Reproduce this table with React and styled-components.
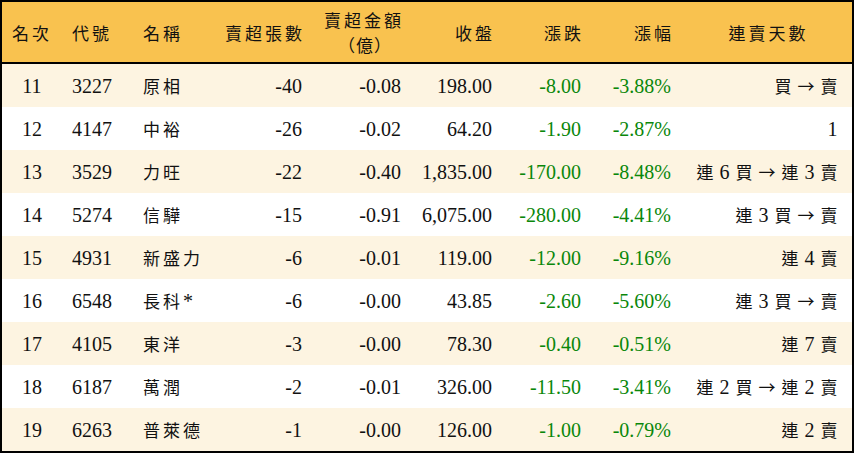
import React from 'react'
import styled, { createGlobalStyle } from 'styled-components'

const GlobalStyle = createGlobalStyle`
  html, body {
    margin: 0;
    padding: 0;
    background: #ffffff;
  }
`

const headerBg = '#f9c24f'
const oddBg = '#fdf4e1'
const downGreen = '#0a870a'

// column layout: width, alignment, paddings
const columns = [
  { width: 60, align: 'center', pl: 0, pr: 0 },
  { width: 70, align: 'left', pl: 10, pr: 0 },
  { width: 80, align: 'left', pl: 11, pr: 0 },
  { width: 100, align: 'right', pl: 0, pr: 10 },
  { width: 99, align: 'right', pl: 0, pr: 10 },
  { width: 91, align: 'right', pl: 0, pr: 10 },
  { width: 89, align: 'right', pl: 0, pr: 10 },
  { width: 90, align: 'right', pl: 0, pr: 10 },
  { width: 169, align: 'right', pl: 0, pr: 12 },
]

const gridColumns = columns.map((c) => `${c.width}px`).join(' ')

const headers = [
  '名次',
  '代號',
  '名稱',
  '賣超張數',
  ['賣超金額', '（億）'],
  '收盤',
  '漲跌',
  '漲幅',
  '連賣天數',
]

const rows = [
  ['11', '3227', '原相', '-40', '-0.08', '198.00', '-8.00', '-3.88%', '買 → 賣'],
  ['12', '4147', '中裕', '-26', '-0.02', '64.20', '-1.90', '-2.87%', '1'],
  ['13', '3529', '力旺', '-22', '-0.40', '1,835.00', '-170.00', '-8.48%', '連 6 買 → 連 3 賣'],
  ['14', '5274', '信驊', '-15', '-0.91', '6,075.00', '-280.00', '-4.41%', '連 3 買 → 賣'],
  ['15', '4931', '新盛力', '-6', '-0.01', '119.00', '-12.00', '-9.16%', '連 4 賣'],
  ['16', '6548', '長科*', '-6', '-0.00', '43.85', '-2.60', '-5.60%', '連 3 買 → 賣'],
  ['17', '4105', '東洋', '-3', '-0.00', '78.30', '-0.40', '-0.51%', '連 7 賣'],
  ['18', '6187', '萬潤', '-2', '-0.01', '326.00', '-11.50', '-3.41%', '連 2 買 → 連 2 賣'],
  ['19', '6263', '普萊德', '-1', '-0.00', '126.00', '-1.00', '-0.79%', '連 2 賣'],
]

const Table = styled.div`
  box-sizing: border-box;
  width: 854px;
  height: 453px;
  border: 2px solid #000;
  background: #fff;
  font-family: "Liberation Serif", "Noto Sans CJK TC", serif;
  color: #111;
  overflow: hidden;
`

const HeaderRow = styled.div`
  display: grid;
  grid-template-columns: ${gridColumns};
  height: 60px;
  background: ${headerBg};
  border-bottom: 2px solid #000;
`

const Row = styled.div`
  display: grid;
  grid-template-columns: ${gridColumns};
  height: 43px;
  background: ${(p) => (p.$odd ? oddBg : '#fff')};
`

const Cell = styled.div`
  display: flex;
  flex-direction: column;
  justify-content: center;
  align-items: ${(p) =>
    p.$align === 'left' ? 'flex-start' : p.$align === 'right' ? 'flex-end' : 'center'};
  padding-left: ${(p) => p.$pl}px;
  padding-right: ${(p) => p.$pr}px;
  font-size: 20px;
  line-height: 24px;
  white-space: nowrap;
  color: ${(p) => (p.$down ? downGreen : 'inherit')};
`

const HeadCell = styled(Cell)`
  font-size: 17px;
  line-height: 24px;
  gap: 1px;
  padding-top: 1px;
  text-align: ${(p) => (p.$align === 'left' ? 'left' : 'right')};
`

const HeadLine = styled.div`
  height: 24px;
  line-height: 24px;
  align-self: ${(p) => (p.$centered ? 'center' : 'auto')};
  margin-left: ${(p) => (p.$centered ? '14px' : '0')};
`

const Han = styled.span`
  font-family: "Noto Sans CJK TC", sans-serif;
  font-size: 17px;
  letter-spacing: ${(p) => p.$spacing}px;
`

const Streak = styled.span`
  letter-spacing: 0.5px;
`

const hanPattern = /([\u2190-\u21ff\u3000-\u9fff\uff00-\uffef]+)/

const renderText = (text, spacing = 3) =>
  text.split(hanPattern).map((part, i) =>
    i % 2 === 1 ? (
      <Han key={i} $spacing={spacing}>{part}</Han>
    ) : (
      part
    )
  )

const App = () => {
  return (
    <>
      <GlobalStyle />
      <Table>
        <HeaderRow>
          {headers.map((h, i) => {
            const col = columns[i]
            const isLast = i === columns.length - 1
            const align = isLast ? 'center' : col.align
            const pr = col.align === 'right' && !isLast ? col.pr - 3 : 0
            const pl = isLast ? 6 : col.pl
            return (
              <HeadCell key={i} $align={align} $pl={pl} $pr={pr}>
                {Array.isArray(h) ? (
                  <>
                    <HeadLine>{renderText(h[0])}</HeadLine>
                    <HeadLine $centered>{renderText(h[1], 1)}</HeadLine>
                  </>
                ) : (
                  <HeadLine>{renderText(h)}</HeadLine>
                )}
              </HeadCell>
            )
          })}
        </HeaderRow>
        {rows.map((r, ri) => (
          <Row key={r[0]} $odd={ri % 2 === 0}>
            {r.map((v, ci) => {
              const col = columns[ci]
              const down = ci === 6 || ci === 7
              const isLast = ci === columns.length - 1
              return (
                <Cell
                  key={ci}
                  $align={col.align}
                  $pl={col.pl}
                  $pr={col.pr}
                  $down={down}
                >
                  {isLast ? (
                    <Streak>{renderText(v, 0.5)}</Streak>
                  ) : (
                    <span>{renderText(v)}</span>
                  )}
                </Cell>
              )
            })}
          </Row>
        ))}
      </Table>
    </>
  )
}

export default App
